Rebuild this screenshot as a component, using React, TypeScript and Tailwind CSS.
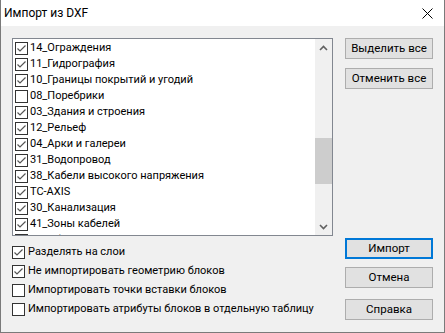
const layers = [
  { name: "14_Ограждения", on: true },
  { name: "11_Гидрография", on: true },
  { name: "10_Границы покрытий и угодий", on: true },
  { name: "08_Поребрики", on: false },
  { name: "03_Здания и строения", on: true },
  { name: "12_Рельеф", on: true },
  { name: "04_Арки и галереи", on: true },
  { name: "31_Водопровод", on: true },
  { name: "38_Кабели высокого напряжения", on: true },
  { name: "TC-AXIS", on: true },
  { name: "30_Канализация", on: true },
  { name: "41_Зоны кабелей", on: true },
  { name: "05_Обрывы", on: true },
];

const options = [
  { label: "Разделять на слои", on: true },
  { label: "Не импортировать геометрию блоков", on: true },
  { label: "Импортировать точки вставки блоков", on: false },
  { label: "Импортировать атрибуты блоков в отдельную таблицу", on: false },
];

const Check = ({ on }: { on: boolean }) => (
  <span className="w-[13px] h-[13px] shrink-0 border border-[#333] bg-white flex items-center justify-center">
    {on ? (
      <svg width="11" height="11" viewBox="0 0 11 11">
        <path d="M1.5 5.5 L4 8 L9.5 2.5" fill="none" stroke="#555" strokeWidth="1.2" />
      </svg>
    ) : null}
  </span>
);

const Btn = ({ label, primary }: { label: string; primary?: boolean }) => (
  <div
    className={
      primary
        ? "w-[88px] h-[21px] bg-[#e1e1e1] border-2 border-[#0078d7] flex items-center justify-center text-[11.5px] text-black"
        : "w-[88px] h-[21px] bg-[#e1e1e1] border border-[#adadad] flex items-center justify-center text-[11.5px] text-black"
    }
  >
    {label}
  </div>
);

export default function App() {
  return (
    <div
      className="w-[445px] h-[333px] border border-[#7a7a7a] border-t-0 bg-[#f0f0f0] flex flex-col overflow-hidden"
      style={{ fontFamily: 'Roboto, "Noto Sans", sans-serif' }}
    >
      <div className="h-[26px] bg-white flex items-center justify-between pl-[3px] pr-[11px] shrink-0">
        <span className="text-[12px] text-black">Импорт из DXF</span>
        <svg width="11" height="11" viewBox="0 0 11 11">
          <path d="M0.5 0.5 L10.5 10.5 M10.5 0.5 L0.5 10.5" stroke="#000" strokeWidth="1" />
        </svg>
      </div>

      <div className="flex gap-[12px] pl-[11px] pt-[12px]">
        <div className="w-[321px] shrink-0 flex flex-col">
          <div className="w-[321px] h-[198px] border border-[#828790] bg-white flex overflow-hidden">
            <div className="flex-1 flex flex-col pt-[1px] pl-[2px] overflow-hidden">
              {layers.map(l => (
                <div key={l.name} className="h-[16px] shrink-0 flex items-center gap-[2px] text-[11px] text-black whitespace-nowrap">
                  <Check on={l.on} />
                  <span>{l.name}</span>
                </div>
              ))}
            </div>
            <div className="w-[17px] bg-[#f0f0f0] flex flex-col">
              <div className="h-[17px] flex items-center justify-center">
                <svg width="9" height="6" viewBox="0 0 9 6">
                  <path d="M1 5 L4.5 1.5 L8 5" fill="none" stroke="#606060" strokeWidth="1.6" />
                </svg>
              </div>
              <div className="h-[82px]" />
              <div className="h-[46px] bg-[#cdcdcd]" />
              <div className="flex-1" />
              <div className="h-[17px] flex items-center justify-center">
                <svg width="9" height="6" viewBox="0 0 9 6">
                  <path d="M1 1 L4.5 4.5 L8 1" fill="none" stroke="#606060" strokeWidth="1.6" />
                </svg>
              </div>
            </div>
          </div>

          <div className="flex flex-col pt-[7px]">
            {options.map(o => (
              <div key={o.label} className="h-[19px] flex items-center gap-[3px] text-[11px] text-black whitespace-nowrap">
                <Check on={o.on} />
                <span>{o.label}</span>
              </div>
            ))}
          </div>
        </div>

        <div className="flex flex-col">
          <Btn label="Выделить все" />
          <div className="h-[9px]" />
          <Btn label="Отменить все" />
          <div className="h-[149px]" />
          <Btn label="Импорт" primary />
          <div className="h-[8px]" />
          <Btn label="Отмена" />
          <div className="h-[11px]" />
          <Btn label="Справка" />
        </div>
      </div>
    </div>
  );
}
